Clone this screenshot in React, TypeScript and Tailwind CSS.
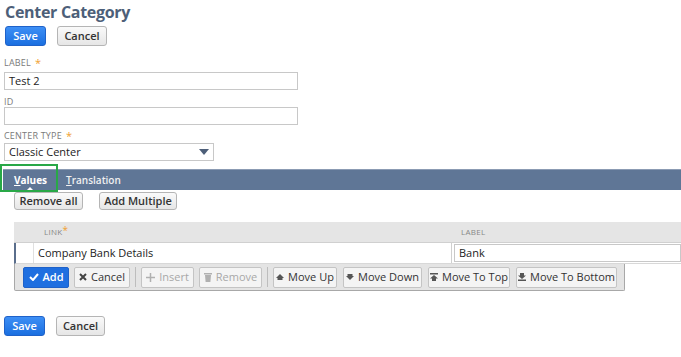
import React from "react";

const font = { fontFamily: '"Open Sans", "Liberation Sans", sans-serif' };

function BlueBtn({ children, w }: { children: React.ReactNode; w: string }) {
  return (
    <div className={`h-[20px] ${w} flex items-center justify-center rounded-[3px] border border-[#1f62c9] bg-gradient-to-b from-[#3d8ff5] to-[#1a6fe0] text-white text-[11px] font-semibold`}>
      {children}
    </div>
  );
}
function GrayBtn({ children, w, h = "h-[20px]" }: { children: React.ReactNode; w: string; h?: string }) {
  return (
    <div className={`${h} ${w} flex items-center justify-center rounded-[3px] border border-[#b5b5b5] bg-gradient-to-b from-[#fafafa] to-[#e6e6e6] text-[#333] text-[11px] font-semibold`}>
      {children}
    </div>
  );
}

function Label({ text, req }: { text: string; req?: boolean }) {
  return (
    <div className="h-[10px] text-[9px] leading-[10px] text-[#7a7a7a] tracking-[0.2px] flex items-start gap-[4px]">
      <span>{text}</span>
      {req && <span className="text-[#f0a030] text-[11px] leading-[10px]">*</span>}
    </div>
  );
}

function TBtn({ children, disabled, w }: { children: React.ReactNode; disabled?: boolean; w: string }) {
  return (
    <div className={`h-[21px] ${w} flex items-center justify-center gap-[4px] rounded-[2px] border border-[#c4c4c4] bg-[#f4f4f4] text-[11px] ${disabled ? "text-[#a8a8a8]" : "text-[#333]"}`}>
      {children}
    </div>
  );
}

const Sep = () => <div className="w-[1px] h-[20px] bg-[#bdbdbd]" />;

export default function App() {
  return (
    <div className="w-[681px] h-[357px] overflow-hidden bg-white relative" style={font}>
      <div className="pl-[5px] h-[24px] text-[16px] leading-[24px] font-bold tracking-[-0.3px] text-[#4d5f79]">Center Category</div>
      <div className="flex gap-[11px] pl-[5px] mt-[2px]">
        <BlueBtn w="w-[41px]">Save</BlueBtn>
        <GrayBtn w="w-[50px]">Cancel</GrayBtn>
      </div>

      <div className="pl-[4px] mt-[12px]">
        <Label text="LABEL" req />
        <div className="mt-[4px] w-[294px] h-[18px] border border-[#c8c8c8] flex items-center px-[4px] text-[11px] text-[#222]">Test 2</div>
        <div className="mt-[7px]"><Label text="ID" /></div>
        <div className="mt-0 w-[294px] h-[18px] border border-[#c8c8c8]" />
        <div className="mt-[6px]"><Label text="CENTER TYPE" req /></div>
        <div className="mt-[2px] w-[210px] h-[18px] border border-[#c8c8c8] flex items-center justify-between px-[4px] text-[11px] text-[#222]">
          <span>Classic Center</span>
          <svg width="10" height="6" viewBox="0 0 10 6"><path d="M0 0h10L5 6z" fill="#4d5f79" /></svg>
        </div>
      </div>

      <div className="mt-[8px] ml-[3px] h-[21px] bg-[#5f7696] border-t border-[#8b9bb3] flex items-center relative">
        <div className="ml-[11px] text-white text-[10px] font-bold relative h-full flex items-center">
          <span><u>V</u>alues</span>
          <div className="absolute left-[12px] bottom-[-1px] w-0 h-0 border-l-[4px] border-r-[4px] border-b-[4px] border-l-transparent border-r-transparent border-b-white" />
        </div>
        <div className="ml-[19px] text-[#f0f0f0] text-[10px] font-semibold"><u>T</u>ranslation</div>
      </div>
      <div className="absolute left-0 top-[164px] w-[58px] h-[28px] border-[2px] border-[#29a847]" />

      <div className="flex gap-[16px] ml-[14px] mt-[2px]">
        <GrayBtn w="w-[69px]" h="h-[18px]">Remove all</GrayBtn>
        <GrayBtn w="w-[78px]" h="h-[18px]">Add Multiple</GrayBtn>
      </div>

      <div className="ml-[14px] mt-[12px]">
        <div className="h-[21px] bg-[#e5e5e5] border-b border-[#d0d0d0] flex items-center text-[8px] text-[#888] tracking-[0.3px]">
          <div className="w-[30px]" />
          <div className="w-[409px] flex items-start"><span>LINK</span><span className="text-[#f0a030] text-[10px] leading-[8px]">*</span></div>
          <div className="pl-[8px]">LABEL</div>
        </div>
        <div className="h-[21px] flex border-l-[2px] border-[#5a6e8c] border-b border-b-[#d8d8d8]">
          <div className="w-[18px] border-r border-[#e0e0e0]" />
          <div className="w-[418px] flex items-center pl-[4px] text-[11px] text-[#222] border-r border-[#d0d0d0]">Company Bank Details</div>
          <div className="flex-1 ml-[2px] my-[1px] border border-[#c8c8c8] flex items-center pl-[4px] text-[11px] text-[#222]">Bank</div>
        </div>
        <div className="w-[611px] h-[27px] bg-[#e4e4e4] border border-[#a8a8a8] border-t-0 flex items-center gap-[5px] pl-[8px] rounded-b-[2px]">
          <div className="h-[21px] w-[46px] flex items-center justify-center gap-[4px] rounded-[2px] border border-[#1f62c9] bg-[#1f6fe0] text-white text-[11px] font-semibold">
            <svg width="10" height="8" viewBox="0 0 10 8"><path d="M1 4l3 3 5-6" stroke="white" strokeWidth="2" fill="none" /></svg>
            Add
          </div>
          <TBtn w="w-[56px]">
            <svg width="8" height="8" viewBox="0 0 8 8"><path d="M1 1l6 6M7 1l-6 6" stroke="#444" strokeWidth="2" /></svg>
            Cancel
          </TBtn>
          <Sep />
          <TBtn w="w-[53px]" disabled>
            <svg width="9" height="9" viewBox="0 0 9 9"><path d="M4.5 0v9M0 4.5h9" stroke="#b0b0b0" strokeWidth="1.5" /></svg>
            Insert
          </TBtn>
          <TBtn w="w-[63px]" disabled>
            <svg width="8" height="10" viewBox="0 0 8 10"><path d="M0 1h8v1.5H0zM1 3h6l-0.6 7H1.6z" fill="#b0b0b0" /></svg>
            Remove
          </TBtn>
          <Sep />
          <TBtn w="w-[64px]">
            <svg width="8" height="6" viewBox="0 0 8 6"><path d="M4 0l4 4H0zM1.5 4h5v2h-5z" fill="#555" /></svg>
            Move Up
          </TBtn>
          <div className="ml-[1px]">
            <TBtn w="w-[79px]">
              <svg width="8" height="6" viewBox="0 0 8 6"><path d="M1.5 0h5v2h-5zM0 2h8L4 6z" fill="#555" /></svg>
              Move Down
            </TBtn>
          </div>
          <div className="ml-[1px]">
            <TBtn w="w-[82px]">
              <svg width="8" height="8" viewBox="0 0 8 8"><path d="M0 0h8v1.5H0zM4 2l4 3.5H0zM2 5.5h4V8H2z" fill="#555" /></svg>
              Move To Top
            </TBtn>
          </div>
          <div className="ml-[1px]">
            <TBtn w="w-[101px]">
              <svg width="8" height="8" viewBox="0 0 8 8"><path d="M2 0h4v2.5H2zM0 2.5h8L4 6zM0 6.5h8V8H0z" fill="#555" /></svg>
              Move To Bottom
            </TBtn>
          </div>
        </div>
      </div>

      <div className="flex gap-[11px] pl-[4px] mt-[25px]">
        <BlueBtn w="w-[41px]">Save</BlueBtn>
        <GrayBtn w="w-[49px]">Cancel</GrayBtn>
      </div>
    </div>
  );
}
